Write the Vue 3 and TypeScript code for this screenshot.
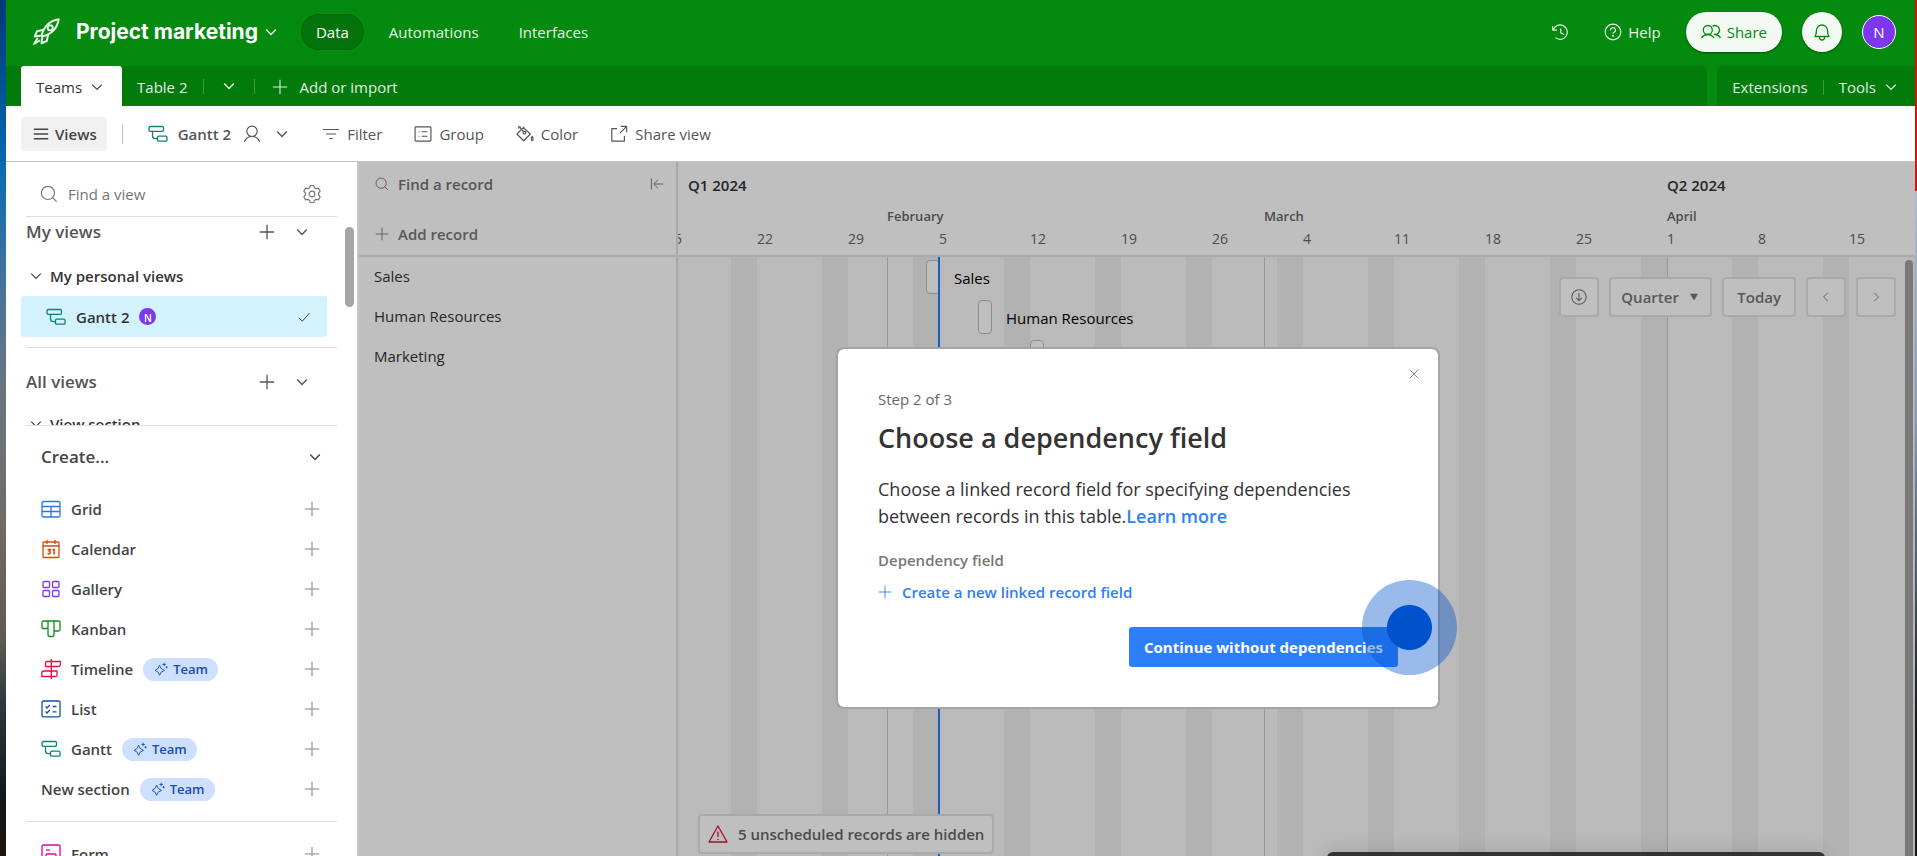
<script setup lang="ts">
import { h, ref } from 'vue'

type IconName = keyof typeof shapes

const shapes = {
  rocket:
    '<path d="M7 12.500C8.500 6.500 12.500 2.500 18.500 1.500C17.500 7.500 13.500 11.500 7.500 13Z"/><circle cx="12.800" cy="7.200" r="1.700"/><path d="M8.300 8.500L4 9.500L2.500 13L6.500 12.500M11.500 11.700L10.500 16L7 17.500L7.500 13.500M4.500 14L2 18L6 15.500"/>',
  chevron: '<path d="M4 7L10 13L16 7"/>',
  chevronLeft: '<path d="M12.500 4L6.500 10L12.500 16"/>',
  chevronRight: '<path d="M7.500 4L13.500 10L7.500 16"/>',
  plus: '<path d="M10 1V19M1 10H19"/>',
  close: '<path d="M4 4L16 16M16 4L4 16"/>',
  history:
    '<path d="M2 3.500V8H6.500M2.500 7.800A8 8 0 1 1 5 16.300"/><path d="M10.800 6V10.800L14.500 13"/>',
  help: '<circle cx="10" cy="10" r="8.700"/><path d="M7.300 8A2.700 2.700 0 1 1 10.800 10.500Q10 10.800 10 12"/><circle cx="10" cy="14.300" r=".5"/>',
  people:
    '<circle cx="6.800" cy="8" r="4.500"/><path d="M.5 16Q3 12.500 6.800 12.500T13 16M11.500 4.300A4.500 4.500 0 1 1 13.500 12.500Q17.500 12.500 19.500 16"/>',
  bell: '<path d="M3 14.500Q4.500 12 4.500 8.500A5.500 5.500 0 0 1 15.500 8.500Q15.500 12 17 14.500Z"/><path d="M7.500 14.500V15.500A2.500 2.500 0 0 0 12.500 15.500V14.500"/>',
  burger: '<path d="M1 4H19M1 10H19M1 16H19"/>',
  gantt:
    '<rect x="1" y="2.500" width="14.500" height="4.800" rx="1.200"/><rect x="9.500" y="12.200" width="9.500" height="5" rx="1.200"/><path d="M4.500 7.300V11.500Q4.500 14.700 7.500 14.700H9.500"/>',
  person:
    '<circle cx="10" cy="7" r="5.800"/><path d="M1.500 18.500Q4 12.800 10 12.800T18.500 18.500"/>',
  filter: '<path d="M1 5H19M4.500 10H15.500M8 15H12"/>',
  group:
    '<rect x="1.200" y="2" width="17.600" height="16" rx="1"/><path d="M8.500 7.500H15M8.500 12.500H15M5 7.500H6M5 12.500H6"/>',
  color:
    '<path d="M2.500 1L9 8M7.500 2.500L16 10L8.500 17.500L1 10L9 2"/><path d="M2.500 3.500L5.500 2"/><circle cx="9.300" cy="8.500" r="1.500"/><path d="M18 12.500Q20 16 18 17.500Q16 16 18 12.500Z"/>',
  external: '<path d="M8 4H2V18H16V12M12 1.500H18.500V8M18 2L11 9"/>',
  search: '<circle cx="8.800" cy="8.800" r="7.300"/><path d="M14 14L18.500 18.500"/>',
  gear: '<path d="M8.300 1.500H11.700L12.500 3.800L14 4.600L16.400 4.100L18.200 7.200L16.600 9V11L18.200 12.800L16.400 15.900L14 15.400L12.500 16.200L11.700 18.500H8.300L7.500 16.200L6 15.400L3.600 15.900L1.800 12.800L3.400 11V9L1.800 7.200L3.600 4.100L6 4.600L7.500 3.800Z"/><circle cx="10" cy="10" r="2.800"/>',
  check: '<path d="M2.500 11L7.500 16L18 4.500"/>',
  grid: '<rect x="1" y="2.500" width="18" height="15.500" rx="1.500"/><path d="M1 7.500H19M1 12.500H19M10 7.500V18"/>',
  calendar:
    '<rect x="2" y="3" width="16" height="15.500" rx="1"/><path d="M2 7H18M6 1V5M14 1V5"/><path stroke-width="1.600" d="M6.500 10.500H9.500L8 12.200Q9.800 12.600 9.200 14T6.500 14.500M11.500 11L13 10.300V15.500"/>',
  gallery:
    '<rect x="2" y="2.500" width="6.500" height="6" rx="1"/><rect x="11.500" y="2.500" width="6.500" height="6" rx="1"/><rect x="2" y="11.500" width="6.500" height="6" rx="1"/><rect x="11.500" y="11.500" width="6.500" height="6" rx="1"/>',
  kanban:
    '<path d="M7 2H2.500Q1 2 1 3.500V8.500Q1 9.500 2 9.500H5.500Q7 9.500 7 8.500V2H13V15.500Q13 17.500 11.500 17.500H8.500Q7 17.500 7 15.500V8M13 2H17.500Q19 2 19 3.500V10.500Q19 12 17.500 12H13"/>',
  timeline:
    '<path d="M10.300 0V20M10.300 2.500H6Q4.500 2.500 4.500 4V7.500H17Q19.500 7.500 19.500 5V2.500H10.300M10.300 12H3Q.8 12 .8 14V17.500H14.500Q16 17.500 16 16V12H10.300"/>',
  list: '<rect x="1" y="2" width="18" height="15.800" rx="1.300"/><path d="M4.500 7.500L6 9L8.800 6M4.500 12.500L6 14L8.800 11M11.500 7.500H15.500M11.500 12.800H15.500"/>',
  form: '<rect x="1" y="1" width="18" height="18" rx="1.500"/><path d="M5 6H9"/><rect x="5" y="10" width="10" height="4.500" rx="1"/>',
  sparkle:
    '<path d="M8 4.500Q8.800 10 15 12Q8.800 13.500 8 19Q7 13.500 1.500 12Q7 10 8 4.500ZM14.500 1V6M12 3.500H17M18 6V9M16.500 7.500H19.500"/>',
  collapse: '<path d="M2 2V18M19 10H6M11.500 4L5.500 10L11.500 16"/>',
  download: '<circle cx="10" cy="10" r="9"/><path d="M10 5V14.500M6.500 11L10 14.500L13.500 11"/>',
  warning: '<path d="M10 2L19 18H1Z"/><path d="M10 7.500V13M10 15V16"/>',
  triangle: '<path fill="currentColor" d="M3 4H17L10 16Z"/>',
}

const Icon = (props: { name: IconName; size?: number; weight?: number }) =>
  h('svg', {
    class: 'icon',
    width: props.size ?? 18,
    height: props.size ?? 18,
    viewBox: '0 0 20 20',
    fill: 'none',
    stroke: 'currentColor',
    'stroke-width': props.weight ?? 1.3,
    'stroke-linejoin': 'round',
    'aria-hidden': 'true',
    innerHTML: shapes[props.name],
  })
Icon.props = ['name', 'size', 'weight']

interface ViewType {
  name: string
  icon: IconName
  tint: string
  team?: boolean
}

const viewTypes: ViewType[] = [
  { name: 'Grid', icon: 'grid', tint: 'blue' },
  { name: 'Calendar', icon: 'calendar', tint: 'orange' },
  { name: 'Gallery', icon: 'gallery', tint: 'purple' },
  { name: 'Kanban', icon: 'kanban', tint: 'green' },
  { name: 'Timeline', icon: 'timeline', tint: 'red', team: true },
  { name: 'List', icon: 'list', tint: 'navy' },
  { name: 'Gantt', icon: 'gantt', tint: 'teal', team: true },
]

const tools: { name: string; icon: IconName }[] = [
  { name: 'Filter', icon: 'filter' },
  { name: 'Group', icon: 'group' },
  { name: 'Color', icon: 'color' },
  { name: 'Share view', icon: 'external' },
]

// Days are counted from Monday, January 15.
const dayWidth = 13
const scrollOffset = -12
const at = (day: number) => ({ left: `${scrollOffset + day * dayWidth}px` })

const weeks = ['15', '22', '29', '5', '12', '19', '26', '4', '11', '18', '25', '1', '8', '15'].map(
  (label, index) => ({ label, day: index * 7 }),
)
const months = [
  { label: 'February', day: 17 },
  { label: 'March', day: 46 },
  { label: 'April', day: 77 },
]
const records = [
  { name: 'Sales', day: 20 },
  { name: 'Human Resources', day: 24 },
  { name: 'Marketing', day: 28 },
]
const today = 21

const viewQuery = ref('')
const recordQuery = ref('')
const scale = ref('Quarter')
</script>

<template>
  <div class="desktop">
    <div class="edge edge-left"></div>
    <div class="app">
      <header class="topbar">
        <Icon name="rocket" :size="30" class="rocket" />
        <h1>Project marketing</h1>
        <button class="bare" aria-label="Base menu"><Icon name="chevron" :size="16" :weight="1.800" /></button>
        <nav class="modes">
          <a href="#" class="active">Data</a>
          <a href="#">Automations</a>
          <a href="#">Interfaces</a>
        </nav>
        <div class="account">
          <button class="bare" aria-label="History"><Icon name="history" /></button>
          <button class="bare help"><Icon name="help" />Help</button>
          <button class="share"><Icon name="people" :size="20" />Share</button>
          <button class="bell" aria-label="Notifications"><Icon name="bell" :size="20" /></button>
          <button class="avatar" aria-label="Account">N</button>
        </div>
      </header>

      <div class="tabbar">
        <div class="tabs">
          <button class="tab">Teams<Icon name="chevron" :size="16" /></button>
          <button class="bare table-two">Table 2</button>
          <i class="sep"></i>
          <button class="bare more" aria-label="All tables"><Icon name="chevron" :size="16" :weight="1.800" /></button>
          <i class="sep"></i>
          <button class="bare add"><Icon name="plus" :size="16" />Add or import</button>
        </div>
        <div class="extras">
          <button class="bare">Extensions</button>
          <i class="sep"></i>
          <button class="bare tools-menu">Tools<Icon name="chevron" :size="16" :weight="1.600" /></button>
        </div>
      </div>

      <div class="toolbar">
        <button class="views"><Icon name="burger" :size="16" :weight="1.800" />Views</button>
        <i class="divider"></i>
        <button class="bare current">
          <Icon name="gantt" :size="20" class="teal" />Gantt 2
          <Icon name="person" :size="18" class="who" />
          <Icon name="chevron" :size="16" :weight="1.800" class="open" />
        </button>
        <button v-for="tool in tools" :key="tool.name" class="bare tool">
          <Icon :name="tool.icon" :size="18" />{{ tool.name }}
        </button>
      </div>

      <div class="main">
        <aside class="sidebar">
          <div class="find">
            <label for="find-view" aria-label="Find a view"><Icon name="search" /></label>
            <input id="find-view" v-model="viewQuery" placeholder="Find a view" />
            <button class="bare" aria-label="View settings"><Icon name="gear" :size="20" :weight="1.200" /></button>
          </div>
          <div class="view-scroll">
            <div class="section-head first">
              <h2>My views</h2>
              <button class="bare" aria-label="Add to my views"><Icon name="plus" :size="16" :weight="1.600" /></button>
              <button class="bare" aria-label="Collapse my views"><Icon name="chevron" :size="16" :weight="1.800" /></button>
            </div>
            <button class="bare folder"><Icon name="chevron" :size="16" />My personal views</button>
            <button class="view-item">
              <Icon name="gantt" :size="20" class="teal" />Gantt 2<span class="mini">N</span>
              <Icon name="check" :size="14" class="tick" />
            </button>
            <div class="section-head second">
              <h2>All views</h2>
              <button class="bare" aria-label="Add to all views"><Icon name="plus" :size="16" :weight="1.600" /></button>
              <button class="bare" aria-label="Collapse all views"><Icon name="chevron" :size="16" :weight="1.800" /></button>
            </div>
            <button class="bare folder clipped"><Icon name="chevron" :size="16" />View section</button>
            <i class="thumb"></i>
          </div>
          <div class="create">
            <button class="bare create-head">Create...<Icon name="chevron" :size="16" :weight="1.800" /></button>
            <button v-for="view in viewTypes" :key="view.name" class="bare create-row">
              <Icon :name="view.icon" :size="20" :class="view.tint" />
              <span>{{ view.name }}</span>
              <span v-if="view.team" class="team"><Icon name="sparkle" :size="14" />Team</span>
              <Icon name="plus" :size="16" class="plus" />
            </button>
            <button class="bare create-row new-section">
              <span>New section</span>
              <span class="team"><Icon name="sparkle" :size="14" />Team</span>
              <Icon name="plus" :size="16" class="plus" />
            </button>
            <hr />
            <button class="bare create-row">
              <Icon name="form" :size="20" class="pink" /><span>Form</span>
              <Icon name="plus" :size="16" class="plus" />
            </button>
          </div>
        </aside>

        <main class="gantt">
          <section class="records">
            <div class="records-head">
              <div class="record-find">
                <label for="find-record" aria-label="Find a record"><Icon name="search" :size="14" /></label>
                <input id="find-record" v-model="recordQuery" placeholder="Find a record" />
                <button class="bare" aria-label="Collapse list"><Icon name="collapse" :size="14" /></button>
              </div>
              <button class="bare record-add"><Icon name="plus" :size="14" />Add record</button>
            </div>
            <ul>
              <li v-for="record in records" :key="record.name">{{ record.name }}</li>
            </ul>
          </section>

          <section class="timeline">
            <div class="scale">
              <strong class="quarter q-first">Q1 2024</strong>
              <strong class="quarter" :style="at(77)">Q2 2024</strong>
              <b v-for="month in months" :key="month.label" class="month" :style="at(month.day)">{{ month.label }}</b>
              <span v-for="week in weeks" :key="week.day" class="week" :style="at(week.day)">{{ week.label }}</span>
            </div>
            <div class="chart">
              <i v-for="month in months" :key="month.label" class="month-line" :style="at(month.day)"></i>
              <div class="lanes">
                <div v-for="record in records" :key="record.name" class="lane">
                  <div class="bar" :style="at(record.day)"><span>{{ record.name }}</span></div>
                </div>
              </div>
              <i class="today-line" :style="at(today)"></i>
              <div class="controls">
                <button class="square" aria-label="Download"><Icon name="download" :size="16" /></button>
                <label class="scale-select">
                  <select v-model="scale" aria-label="Time scale">
                    <option>Quarter</option>
                    <option>Month</option>
                    <option>Year</option>
                  </select>
                  <Icon name="triangle" :size="10" />
                </label>
                <button class="today">Today</button>
                <button class="square" aria-label="Previous"><Icon name="chevronLeft" :size="14" /></button>
                <button class="square" aria-label="Next"><Icon name="chevronRight" :size="14" /></button>
              </div>
              <button class="notice"><Icon name="warning" :size="20" />5 unscheduled records are hidden</button>
              <i class="chart-thumb"></i>
            </div>
          </section>

          <div class="shade">
            <div class="dialog" role="dialog" aria-labelledby="dialog-title">
              <button class="bare dismiss" aria-label="Close"><Icon name="close" :size="14" /></button>
              <p class="step">Step 2 of 3</p>
              <h2 id="dialog-title">Choose a dependency field</h2>
              <p class="copy">
                Choose a linked record field for specifying dependencies<br />between records in this table.<a href="#">Learn more</a>
              </p>
              <p class="field">Dependency field</p>
              <button class="bare link"><Icon name="plus" :size="14" />Create a new linked record field</button>
              <button class="continue">Continue without dependencies</button>
              <i class="pointer"></i>
            </div>
          </div>
          <i class="dock"></i>
        </main>
      </div>
    </div>
    <div class="edge edge-right"></div>
  </div>
</template>

<style>
body {
  overflow: hidden;
}
</style>

<style scoped>
* {
  box-sizing: border-box;
}
.desktop {
  display: grid;
  grid-template-columns: 6px minmax(0, 1fr) 2px;
  height: 100vh;
  font: 15px/20px 'Open Sans', 'Noto Sans', sans-serif;
  color: #333;
}
.edge-left {
  background: linear-gradient(#003a78, #04569c 12%, #0a6cb0 20%, #40739f 32%, #6b7480 45%, #706d6a 60%, #5d5a53 75%, #30393d 82%, #14181b 93%, #1c1410);
}
.edge-right {
  background: linear-gradient(#d5120c 191px, #b3bccb 191px, #7b96b5 50%, #181818 85%);
}
.app {
  display: flex;
  flex-direction: column;
  min-width: 0;
  min-height: 0;
}
button,
input,
select {
  font: inherit;
  color: inherit;
}
button {
  display: flex;
  align-items: center;
  cursor: pointer;
}
.bare {
  padding: 0;
  border: 0;
  background: none;
}
.icon {
  flex: none;
  display: block;
}
h1,
h2,
p,
ul {
  margin: 0;
  padding: 0;
}

/* Top bar */
.topbar {
  flex: none;
  display: flex;
  align-items: center;
  height: 66px;
  padding: 0 19px 3px 25px;
  background: #048a0e;
  color: #e6f3e7;
}
.rocket {
  margin-right: 15px;
}
h1 {
  margin-right: 5px;
  font: 700 21px/28px Inter, sans-serif;
  color: #fff;
}
.modes {
  display: flex;
  gap: 10px;
  margin-left: 22px;
}
.modes a {
  padding: 8px 15px;
  border-radius: 18px;
  color: inherit;
  text-decoration: none;
}
.modes .active {
  background: #04730b;
  color: #fff;
  box-shadow: inset 0 0 1px 1px #036a0a;
}
.account {
  display: flex;
  align-items: center;
  margin-left: auto;
}
.help {
  gap: 6px;
  margin: 0 25px 0 35px;
}
.share {
  gap: 6px;
  height: 40px;
  padding: 0 15px;
  border: 0;
  border-radius: 20px;
  background: #f2f9f3;
  color: #048a0e;
  box-shadow: 0 1px 2px #0006;
}
.bell {
  justify-content: center;
  width: 40px;
  height: 40px;
  margin: 0 20px;
  padding: 0;
  border: 0;
  border-radius: 50%;
  background: #f2f9f3;
  color: #048a0e;
  box-shadow: 0 1px 2px #0006;
}
.avatar {
  justify-content: center;
  width: 34px;
  height: 34px;
  padding: 0;
  border: 1px solid #fff;
  border-radius: 50%;
  background: #7c37ef;
  color: #fff;
}

/* Table tabs */
.tabbar {
  flex: none;
  display: flex;
  gap: 10px;
  height: 40px;
  background: #048a0e;
  color: #e0f0e1;
}
.tabs {
  flex: 1;
  display: flex;
  align-items: center;
  padding-left: 15px;
  border-radius: 0 6px 0 0;
  background: #037a0c;
}
.tab {
  gap: 7px;
  height: 40px;
  padding: 2px 17px 0 15px;
  border: 0;
  border-radius: 3px 3px 0 0;
  background: #fff;
  color: #333;
}
.table-two {
  margin: 2px 15px 0;
}
.sep {
  width: 1px;
  height: 15px;
  background: #3b9a41;
}
.more {
  margin: 0 17px;
}
.add {
  gap: 12px;
  margin: 2px 0 0 17px;
}
.extras {
  display: flex;
  align-items: center;
  gap: 15px;
  padding: 2px 16px 0 15px;
  border-radius: 6px 0 0 0;
  background: #037a0c;
}
.tools-menu {
  gap: 7px;
}

/* View toolbar */
.toolbar {
  flex: none;
  display: flex;
  align-items: center;
  height: 56px;
  padding: 0 15px;
  border-bottom: 1px solid #c6c6c6;
  background: #fff;
  color: #555;
}
.views {
  gap: 6px;
  height: 34px;
  padding: 0 10px 0 12px;
  border: 0;
  border-radius: 4px;
  background: #f1f1f1;
  font-weight: 600;
  color: #444;
}
.divider {
  width: 1px;
  height: 20px;
  margin: 0 25px 0 15px;
  background: #c4c4c4;
}
.current {
  gap: 10px;
  font-weight: 600;
}
.who {
  margin-left: 2px;
}
.open {
  margin-left: 3px;
}
.tool {
  gap: 7px;
  margin-left: 32px;
}
.main {
  flex: 1;
  display: flex;
  min-height: 0;
}

/* Sidebar */
.sidebar {
  flex: none;
  width: 353px;
  overflow: hidden;
  border-right: 2px solid #c6c6c6;
  background: #fff;
}
.find {
  display: flex;
  align-items: center;
  gap: 10px;
  height: 55px;
  margin: 0 20px;
  padding: 10px 15px 0 14px;
  border-bottom: 1px solid #dfdfdf;
  color: #777;
}
.find input,
.record-find input {
  flex: 1;
  min-width: 0;
  padding: 0;
  border: 0;
  outline: 0;
  background: none;
}
input::placeholder {
  color: #757575;
  opacity: 1;
}
.view-scroll {
  position: relative;
  height: 209px;
  overflow: hidden;
}
.view-scroll::after {
  content: '';
  display: block;
  position: absolute;
  inset: auto 20px 0;
  border-bottom: 1px solid #dfdfdf;
}
.section-head {
  display: flex;
  align-items: center;
  gap: 19px;
  height: 24px;
  padding: 0 47px 0 20px;
  color: #555;
}
.section-head h2 {
  flex: 1;
  font-size: 17px;
  line-height: 24px;
  font-weight: 600;
}
.first {
  margin-top: 3px;
}
.folder {
  gap: 6px;
  height: 40px;
  margin: 12px 0 0 22px;
  font-weight: 600;
}
.view-item {
  gap: 10px;
  width: 306px;
  height: 41px;
  margin-left: 15px;
  padding: 0 16px 0 25px;
  border: 0;
  border-radius: 3px;
  background: #d4f1fe;
  font-weight: 600;
}
.mini {
  display: grid;
  place-items: center;
  width: 17px;
  height: 17px;
  border-radius: 50%;
  background: #7c37ef;
  font-size: 10px;
  color: #fff;
}
.tick {
  margin-left: auto;
}
.second {
  height: 57px;
  margin: 10px 20px 0;
  padding: 11px 27px 0 0;
  border-top: 1px solid #dfdfdf;
}
.clipped {
  margin-top: 0;
}
.thumb {
  position: absolute;
  top: 10px;
  right: 3px;
  width: 9px;
  height: 80px;
  border-radius: 5px;
  background: #a5a5a5;
}
.create {
  padding-top: 11px;
}
.create-head {
  justify-content: space-between;
  width: 282px;
  height: 40px;
  margin: 0 0 12px 35px;
  font-size: 17px;
  font-weight: 600;
  color: #444;
}
.create-row {
  gap: 10px;
  width: 280px;
  height: 40px;
  margin-left: 35px;
  padding-right: 1px;
  font-weight: 600;
  color: #444;
}
.create-row > .plus {
  margin-left: auto;
  color: #888;
}
.team {
  display: flex;
  align-items: center;
  gap: 5px;
  height: 23px;
  padding: 0 10px 0 11px;
  border-radius: 12px;
  background: #cfdfff;
  font-size: 13px;
  color: #164ea9;
}
hr {
  margin: 12px 20px;
  border: 0;
  border-top: 1px solid #dfdfdf;
}
.blue { color: #2478e8; }
.orange { color: #d9480f; }
.purple { color: #7c37ef; }
.green { color: #0a8f1a; }
.red { color: #e0103f; }
.navy { color: #164ea9; }
.teal { color: #118076; }
.pink { color: #dd04a8; }

/* Gantt */
.gantt {
  position: relative;
  flex: 1;
  display: flex;
  min-width: 0;
  overflow: hidden;
  background: #fff;
}
.records {
  flex: none;
  width: 319px;
  border-right: 2px solid #e2e2e2;
}
.records-head {
  height: 95px;
  padding: 11px 12px 0 16px;
  border-bottom: 2px solid #e2e2e2;
  color: #777;
}
.record-find,
.record-add {
  gap: 9px;
  font-weight: 600;
}
.record-find {
  display: flex;
  align-items: center;
  height: 22px;
}
.record-add {
  height: 22px;
  margin-top: 28px;
}
li {
  padding: 0 15px 2px;
  line-height: 38px;
  list-style: none;
}
.timeline {
  flex: 1;
  display: flex;
  flex-direction: column;
  min-width: 0;
}
.scale {
  position: relative;
  flex: none;
  height: 95px;
  border-bottom: 2px solid #e2e2e2;
  overflow: hidden;
}
.scale > * {
  position: absolute;
  white-space: nowrap;
}
.quarter {
  top: 13px;
  font-weight: 600;
}
.q-first {
  left: 10px;
}
.month {
  top: 44px;
  font-size: 13px;
  font-weight: 600;
  color: #666;
}
.week {
  top: 67px;
  font-size: 14px;
  color: #666;
}
.chart {
  position: relative;
  flex: 1;
  background: repeating-linear-gradient(90deg, #f8f8f8 0 53px, #eee 53px 79px, #f8f8f8 79px 91px);
}
.month-line,
.today-line {
  position: absolute;
  top: 0;
  bottom: 0;
  width: 1px;
  background: #ccc;
}
.today-line {
  width: 2px;
  margin-left: -1px;
  background: #237bff;
}
.lanes {
  padding-top: 3px;
}
.lane {
  position: relative;
  height: 40px;
}
.bar {
  position: absolute;
  width: 14px;
  height: 34px;
  border: 1px solid #bdbdbd;
  border-radius: 4px;
  background: #fff;
}
.bar span {
  position: absolute;
  left: 27px;
  line-height: 34px;
  white-space: nowrap;
  color: #000;
}
.controls {
  position: absolute;
  top: 20px;
  right: 19px;
  display: flex;
  gap: 10px;
  color: #777;
}
.controls button,
.scale-select,
.notice {
  justify-content: center;
  height: 40px;
  padding: 0;
  border: 2px solid #e2e2e2;
  border-radius: 4px;
  background: #fff;
  font-weight: 600;
}
.controls .square {
  width: 40px;
}
.controls .today {
  padding: 0 13px;
}
.scale-select {
  display: flex;
  align-items: center;
  gap: 10px;
  padding: 0 11px 0 10px;
}
.scale-select select {
  appearance: none;
  padding: 0;
  border: 0;
  background: none;
}
.notice {
  position: absolute;
  bottom: 2px;
  left: 20px;
  gap: 10px;
  padding: 0 8px;
  color: #666;
}
.notice .icon {
  color: #e0103f;
}
.chart-thumb {
  position: absolute;
  top: 3px;
  right: 2px;
  bottom: -10px;
  width: 8px;
  border-radius: 4px;
  background: #a2a2a2;
}

/* Dialog */
.shade {
  position: absolute;
  inset: 0;
  display: flex;
  justify-content: center;
  align-items: flex-start;
  padding: 185px 0 0 2px;
  background: #00000040;
}
.dialog {
  position: relative;
  display: flex;
  flex-direction: column;
  width: 604px;
  padding: 40px;
  border: 2px solid #a4a4a4;
  border-radius: 8px;
  background: #fff;
  background-clip: padding-box;
}
.dismiss {
  position: absolute;
  top: 18px;
  right: 17px;
  color: #777;
}
.step {
  color: #666;
}
.dialog h2 {
  margin-top: 10px;
  font-size: 27px;
  line-height: 38px;
  font-weight: 600;
}
.copy {
  margin-top: 19px;
  font-size: 18px;
  line-height: 27px;
}
.copy a {
  font-weight: 600;
  color: #2d7ff9;
  text-decoration: none;
}
.field {
  margin-top: 20px;
  font-weight: 600;
  color: #777;
}
.link {
  gap: 10px;
  margin-top: 12px;
  font-weight: 600;
  color: #2d7ff9;
}
.continue {
  align-self: flex-end;
  height: 40px;
  margin-top: 25px;
  padding: 0 15px;
  border: 0;
  border-radius: 3px;
  background: #2d7ff9;
  font-weight: 700;
  color: #fff;
}
.pointer {
  position: absolute;
  right: -19px;
  bottom: 32px;
  width: 95px;
  height: 95px;
  border-radius: 50%;
  background: radial-gradient(circle, #0052cc 22px, #0052cc66 23px);
}
.dock {
  position: absolute;
  right: 90px;
  bottom: -20px;
  width: 498px;
  height: 24px;
  border-radius: 6px;
  background: #333336;
  box-shadow: 0 0 20px #0002;
}
</style>
